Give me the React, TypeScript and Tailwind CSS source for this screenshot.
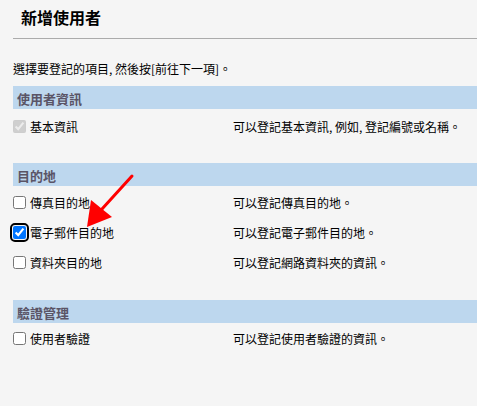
import React from "react";

type RowProps = {
  label: string;
  desc: string;
  checked?: boolean;
  disabled?: boolean;
  focused?: boolean;
};

function Row({ label, desc, checked, disabled, focused }: RowProps) {
  return (
    <div className="grid grid-cols-[220px_1fr] h-[30px] items-center">
      <div className="flex items-center">
        <span
          className={
            focused
              ? "flex w-[13px] h-[13px] rounded-[2px] outline-2 outline-solid outline-black outline-offset-1"
              : "flex w-[13px] h-[13px]"
          }
        >
          <input
            type="checkbox"
            defaultChecked={checked}
            disabled={disabled}
            className="w-[13px] h-[13px] m-0 accent-[#0075ff]"
          />
        </span>
        <span className="ml-[4px] leading-[15px]">{label}</span>
      </div>
      <div className="leading-[15px]">{desc}</div>
    </div>
  );
}

function Band({ title }: { title: string }) {
  return (
    <div className="h-[23px] bg-[#bdd7ee] pl-[4px] pt-[5px] text-[13px] leading-[15px] font-bold text-[#5a5466]">
      {title}
    </div>
  );
}

export default function App() {
  return (
    <div className="relative w-[477px] h-[406px] overflow-hidden bg-[#f5f5f5] text-black font-['Noto_Sans_CJK_TC','Noto_Sans',sans-serif] text-[12px]">
      <div className="h-[38px] pl-[21px] pt-[7px] text-[16px] leading-[20px] font-bold">
        新增使用者
      </div>
      <div className="ml-[13px] h-px bg-[#ababab]" />
      <div className="pl-[13px]">
        <div className="h-[47px] pt-[22px] leading-[15px]">
          選擇要登記的項目, 然後按[前往下一項]。
        </div>

        <Band title="使用者資訊" />
        <div className="pt-[2px]">
          <Row
            label="基本資訊"
            desc="可以登記基本資訊, 例如, 登記編號或名稱。"
            checked
            disabled
          />
        </div>

        <div className="mt-[22px]">
          <Band title="目的地" />
          <div className="pt-[1px]">
            <Row label="傳真目的地" desc="可以登記傳真目的地。" />
            <Row
              label="電子郵件目的地"
              desc="可以登記電子郵件目的地。"
              checked
              focused
            />
            <Row label="資料夾目的地" desc="可以登記網路資料夾的資訊。" />
          </div>
        </div>

        <div className="mt-[23px]">
          <Band title="驗證管理" />
          <Row label="使用者驗證" desc="可以登記使用者驗證的資訊。" />
        </div>
      </div>

      <svg
        className="absolute left-0 top-0 pointer-events-none"
        width="477"
        height="406"
        viewBox="0 0 477 406"
      >
        <line
          x1="132"
          y1="176"
          x2="102"
          y2="209"
          stroke="#ff0000"
          strokeWidth="3"
          strokeLinecap="round"
        />
        <polygon points="87,227 91,200 112,217" fill="#ff0000" />
      </svg>
    </div>
  );
}
